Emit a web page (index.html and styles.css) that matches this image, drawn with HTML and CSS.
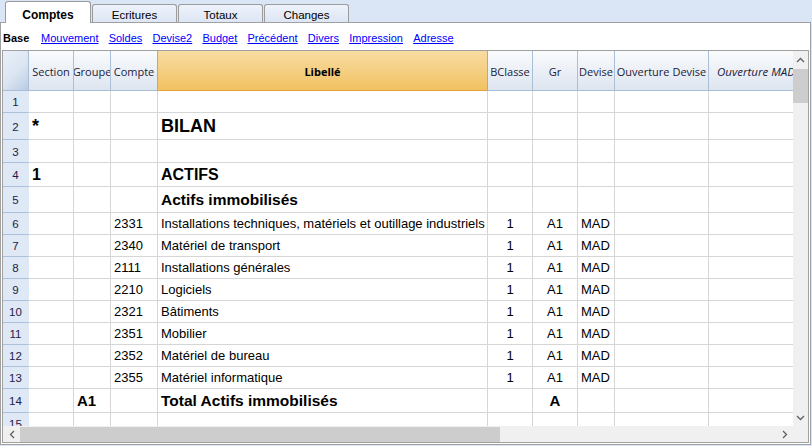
FILE: index.html
```html
<!DOCTYPE html>
<html>
<head>
<meta charset="utf-8">
<link rel="stylesheet" href="styles.css">
</head>
<body>
<div class="tabs">
  <div class="tab active">Comptes</div>
  <div class="tab">Ecritures</div>
  <div class="tab">Totaux</div>
  <div class="tab">Changes</div>
</div>
<div class="panel">
  <div class="views">
    <span class="current">Base</span>
    <a href="#">Mouvement</a>
    <a href="#">Soldes</a>
    <a href="#">Devise2</a>
    <a href="#">Budget</a>
    <a href="#">Précédent</a>
    <a href="#">Divers</a>
    <a href="#">Impression</a>
    <a href="#">Adresse</a>
  </div>
  <div class="frame">
    <div class="frame-top">
      <div class="viewport">
        <div class="row head">
          <div class="c corner"></div>
          <div class="c">Section</div>
          <div class="c">Groupe</div>
          <div class="c before-lib">Compte</div>
          <div class="c lib">Libellé</div>
          <div class="c">BClasse</div>
          <div class="c">Gr</div>
          <div class="c">Devise</div>
          <div class="c">Ouverture Devise</div>
          <div class="c it">Ouverture MAD</div>
        </div>
        <div class="row h22"><div class="c n">1</div><div class="c"></div><div class="c"></div><div class="c"></div><div class="c"></div><div class="c"></div><div class="c"></div><div class="c"></div><div class="c"></div><div class="c"></div></div>
        <div class="row h27"><div class="c n">2</div><div class="c t b18">*</div><div class="c"></div><div class="c"></div><div class="c t b18">BILAN</div><div class="c"></div><div class="c"></div><div class="c"></div><div class="c"></div><div class="c"></div></div>
        <div class="row h23"><div class="c n">3</div><div class="c"></div><div class="c"></div><div class="c"></div><div class="c"></div><div class="c"></div><div class="c"></div><div class="c"></div><div class="c"></div><div class="c"></div></div>
        <div class="row h24"><div class="c n">4</div><div class="c t b16">1</div><div class="c"></div><div class="c"></div><div class="c t b16">ACTIFS</div><div class="c"></div><div class="c"></div><div class="c"></div><div class="c"></div><div class="c"></div></div>
        <div class="row h26"><div class="c n">5</div><div class="c"></div><div class="c"></div><div class="c"></div><div class="c t b15">Actifs immobilisés</div><div class="c"></div><div class="c"></div><div class="c"></div><div class="c"></div><div class="c"></div></div>
        <div class="row h22"><div class="c n">6</div><div class="c"></div><div class="c"></div><div class="c t">2331</div><div class="c t">Installations techniques, matériels et outillage industriels</div><div class="c ctr">1</div><div class="c ctr">A1</div><div class="c t">MAD</div><div class="c"></div><div class="c"></div></div>
        <div class="row h22"><div class="c n">7</div><div class="c"></div><div class="c"></div><div class="c t">2340</div><div class="c t">Matériel de transport</div><div class="c ctr">1</div><div class="c ctr">A1</div><div class="c t">MAD</div><div class="c"></div><div class="c"></div></div>
        <div class="row h22"><div class="c n">8</div><div class="c"></div><div class="c"></div><div class="c t">2111</div><div class="c t">Installations générales</div><div class="c ctr">1</div><div class="c ctr">A1</div><div class="c t">MAD</div><div class="c"></div><div class="c"></div></div>
        <div class="row h22"><div class="c n">9</div><div class="c"></div><div class="c"></div><div class="c t">2210</div><div class="c t">Logiciels</div><div class="c ctr">1</div><div class="c ctr">A1</div><div class="c t">MAD</div><div class="c"></div><div class="c"></div></div>
        <div class="row h22"><div class="c n">10</div><div class="c"></div><div class="c"></div><div class="c t">2321</div><div class="c t">Bâtiments</div><div class="c ctr">1</div><div class="c ctr">A1</div><div class="c t">MAD</div><div class="c"></div><div class="c"></div></div>
        <div class="row h22"><div class="c n">11</div><div class="c"></div><div class="c"></div><div class="c t">2351</div><div class="c t">Mobilier</div><div class="c ctr">1</div><div class="c ctr">A1</div><div class="c t">MAD</div><div class="c"></div><div class="c"></div></div>
        <div class="row h22"><div class="c n">12</div><div class="c"></div><div class="c"></div><div class="c t">2352</div><div class="c t">Matériel de bureau</div><div class="c ctr">1</div><div class="c ctr">A1</div><div class="c t">MAD</div><div class="c"></div><div class="c"></div></div>
        <div class="row h22"><div class="c n">13</div><div class="c"></div><div class="c"></div><div class="c t">2355</div><div class="c t">Matériel informatique</div><div class="c ctr">1</div><div class="c ctr">A1</div><div class="c t">MAD</div><div class="c"></div><div class="c"></div></div>
        <div class="row h24"><div class="c n">14</div><div class="c"></div><div class="c t b15s">A1</div><div class="c"></div><div class="c t b15">Total Actifs immobilisés</div><div class="c"></div><div class="c ctr b15s">A</div><div class="c"></div><div class="c"></div><div class="c"></div></div>
        <div class="row h22"><div class="c n">15</div><div class="c"></div><div class="c"></div><div class="c"></div><div class="c"></div><div class="c"></div><div class="c"></div><div class="c"></div><div class="c"></div><div class="c"></div></div>
      </div>
      <div class="vscroll">
        <div class="arr up"><svg width="9" height="6" viewBox="0 0 9 6"><polyline points="1,5 4.5,1.5 8,5" fill="none" stroke="#606060" stroke-width="1.3"/></svg></div>
        <div class="vthumb"></div>
        <div class="track"></div>
        <div class="arr down"><svg width="9" height="6" viewBox="0 0 9 6"><polyline points="1,1 4.5,4.5 8,1" fill="none" stroke="#606060" stroke-width="1.3"/></svg></div>
      </div>
    </div>
    <div class="frame-bottom">
      <div class="hscroll">
        <div class="arr left"><svg width="6" height="9" viewBox="0 0 6 9"><polyline points="5,1 1.5,4.5 5,8" fill="none" stroke="#606060" stroke-width="1.3"/></svg></div>
        <div class="hthumb"></div>
        <div class="track"></div>
        <div class="arr right"><svg width="6" height="9" viewBox="0 0 6 9"><polyline points="1,1 4.5,4.5 1,8" fill="none" stroke="#606060" stroke-width="1.3"/></svg></div>
      </div>
      <div class="sbcorner"></div>
    </div>
  </div>
</div>
</body>
</html>
```

FILE: styles.css
```css
html, body {
  margin: 0;
  padding: 0;
}
body {
  width: 812px;
  height: 446px;
  overflow: hidden;
  background: #dae5f6;
  font-family: "Liberation Sans", Arial, sans-serif;
  color: #000;
}

/* Tabs */
.tabs {
  display: flex;
  align-items: flex-end;
  height: 22px;
  padding-left: 5px;
  gap: 1px;
  box-sizing: border-box;
}
.tab {
  box-sizing: border-box;
  width: 85px;
  height: 18px;
  padding-top: 2px;
  border: 1px solid #9c9c9c;
  border-bottom: none;
  border-radius: 3px 3px 0 0;
  background: linear-gradient(#eef3fb, #dde6f5);
  font-size: 11.5px;
  display: flex;
  align-items: center;
  justify-content: center;
}
.tab.active {
  width: 86px;
  height: 22px;
  padding-top: 4px;
  margin-bottom: -1px;
  background: #fff;
  font-weight: bold;
  font-size: 12px;
  position: relative;
  z-index: 1;
}

/* Panel */
.panel {
  box-sizing: border-box;
  width: 811px;
  height: 423px;
  border: 1px solid #a0a0a0;
  background: #fff;
}
.views {
  box-sizing: border-box;
  height: 27px;
  padding: 2px 0 0 2px;
  display: flex;
  align-items: center;
  gap: 10.2px;
  font-size: 11px;
}
.views .current {
  font-weight: bold;
  margin-right: 1.5px;
}
.views a {
  color: #0000ff;
  text-decoration: underline;
}

/* Grid frame */
.frame {
  box-sizing: border-box;
  margin-left: 1px;
  width: 807px;
  height: 393px;
  border: 1px solid #a0a0a0;
  display: flex;
  flex-direction: column;
}
.frame-top {
  display: flex;
  height: 375px;
}
.viewport {
  width: 790px;
  height: 375px;
  overflow: hidden;
}
.frame-bottom {
  display: flex;
  height: 16px;
}

.row {
  display: grid;
  grid-template-columns: 26px 45px 37px 47px 330px 45px 45px 37px 94px 94px;
  height: 22px;
}
.h22 { height: 22px; }
.h23 { height: 23px; }
.h24 { height: 24px; }
.h26 { height: 26px; }
.h27 { height: 27px; }

.c {
  box-sizing: border-box;
  border-right: 1px solid #d6d6d6;
  border-bottom: 1px solid #d6d6d6;
  overflow: hidden;
  white-space: nowrap;
  display: flex;
  align-items: center;
  font-size: 13px;
}
.c.t { padding-left: 3px; }
.c.ctr { justify-content: center; }
.b18 { font-weight: bold; font-size: 18px; }
.b16 { font-weight: bold; font-size: 16px; }
.b15 { font-weight: bold; font-size: 15.5px; }
.b15s { font-weight: bold; font-size: 15px; }

.c.n {
  background: #dfe8f5;
  border-right-color: #dfe8f5;
  border-bottom-color: #a9bfdc;
  justify-content: center;
  font-size: 11.5px;
  color: #1c1c4a;
  padding-top: 1px;
}

/* Header */
.head {
  height: 40px;
}
.head .c {
  background: linear-gradient(#fafbfd, #dde5f0);
  border-right-color: #a9bed8;
  border-bottom-color: #a9bed8;
  justify-content: center;
  font-family: "Open Sans", "Liberation Sans", sans-serif;
  font-size: 11px;
  color: #1b1b3b;
  padding-top: 2px;
}
.head .c.corner {
  background: linear-gradient(135deg, #eaf0f9 0%, #dbe5f2 55%, #b9cbe2 100%);
}
.head .c.before-lib {
  border-right-color: #e6a23d;
}
.head .c.lib {
  background: linear-gradient(#f8dca3, #f1c262);
  border-right-color: #e6a23d;
  border-bottom-color: #e6a23d;
  font-weight: bold;
  color: #000;
}
.head .c.it {
  font-style: italic;
  justify-content: flex-start;
  padding-left: 8px;
  font-size: 11.5px;
}

/* Scrollbars */
.vscroll {
  width: 15px;
  background: #f0f0f0;
  display: flex;
  flex-direction: column;
}
.vscroll .up { height: 18px; }
.vscroll .down { height: 16px; }
.vthumb {
  height: 34px;
  background: #cdcdcd;
}
.track { flex: 1; }
.arr {
  display: flex;
  align-items: center;
  justify-content: center;
}
.arr svg { display: block; }
.hscroll {
  width: 790px;
  display: flex;
  background: #f0f0f0;
}
.hscroll .left, .hscroll .right { width: 17px; }
.hthumb {
  width: 480px;
  margin-top: 1px;
  background: #cdcdcd;
}
.sbcorner {
  width: 15px;
  background: #f0f0f0;
}
```
